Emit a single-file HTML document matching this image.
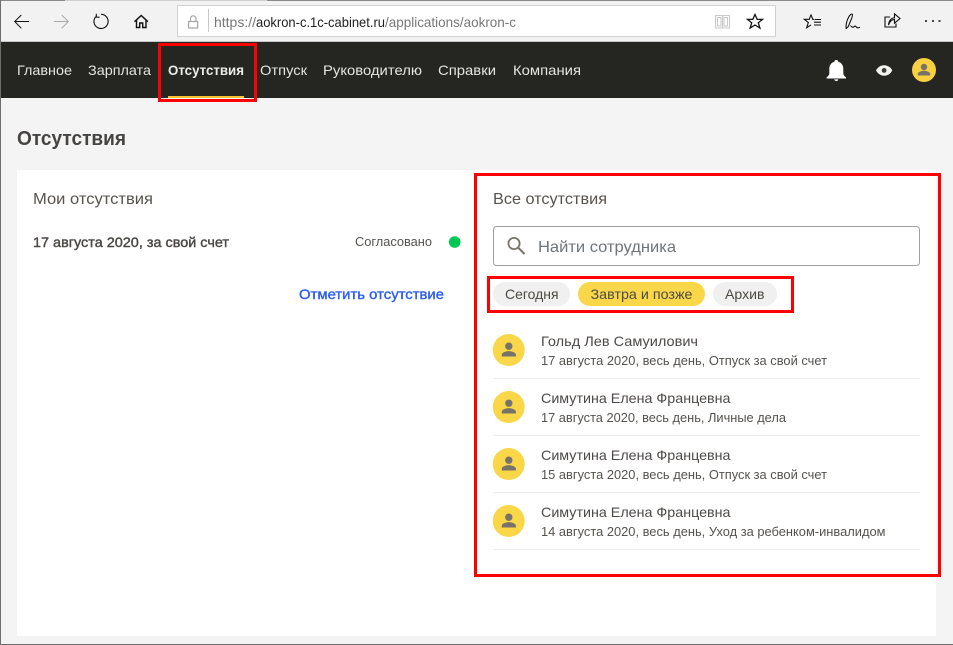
<!DOCTYPE html>
<html lang="ru">
<head>
<meta charset="utf-8">
<title>Отсутствия</title>
<style>
html,body{margin:0;padding:0;width:953px;height:645px;overflow:hidden;background:#f4f4f4}
svg{display:block}
text{font-family:"Liberation Sans",sans-serif}
.nav{font-size:14px;fill:#e4e4e0}
.name{font-size:14px;fill:#4d4a48}
.sub{font-size:12.5px;fill:#55534f}
.chip{font-size:14px;fill:#4d4a44}
.ic{fill:none;stroke:#111;stroke-width:1.1}
</style>
</head>
<body>
<svg width="953" height="645" viewBox="0 0 953 645" xmlns="http://www.w3.org/2000/svg">
<defs>
<g id="p"><path fill="#77736a" d="M501.800 356.500v-1.800c0-2.400 4.700-3.600 7-3.600s7 1.200 7.200 3.600v1.800z"/><circle cx="508.800" cy="346.200" r="3.700" fill="#77736a"/></g>
</defs>
<!-- browser chrome -->
<rect width="953" height="42" fill="#f2f2f2"/>
<rect x="0" y="0" width="65" height="1" fill="#8a8a8a"/>
<rect x="65" y="0" width="202" height="1" fill="#d0d0d0"/>
<rect x="267" y="0" width="686" height="1" fill="#8a8a8a"/>
<rect x="0" y="41" width="953" height="1" fill="#c8c8c8"/>
<rect x="177.500" y="5.500" width="598" height="31" fill="#fff" stroke="#d2d2d2"/>
<path class="ic" stroke-width="1" style="stroke-width:1" d="M29 21.500H14.700M21.300 15l-6.600 6.500 6.600 6.800"/>
<path class="ic" style="stroke:#a8a8a8;stroke-width:1" d="M54 21.500h14.300M61.700 15l6.600 6.500-6.600 6.800"/>
<path class="ic" d="M101 14.300a7.100 7.100 0 1 1-5.200 2.300M96.300 13.800v3.200l3.300.3"/>
<path class="ic" style="stroke-width:1.400" d="M134.500 21.700l6.700-6.200 6.700 6.200M136.500 20v7.500h3.200v-4.500h3v4.500h3.300V20"/>
<path fill="none" stroke="#a6a6a6" stroke-width="1.200" d="M188.600 21.500h9v6.500h-9zM190.500 21.500v-3a2.700 2.700 0 0 1 5.400 0v3"/>
<rect x="208" y="9" width="1" height="23" fill="#c8c8c8"/>
<text x="214" y="27" font-size="14" fill="#777" textLength="42" lengthAdjust="spacingAndGlyphs">https://</text>
<text x="256" y="27" font-size="14" fill="#222" textLength="129" lengthAdjust="spacingAndGlyphs">aokron-c.1c-cabinet.ru</text>
<text x="385" y="27" font-size="14" fill="#777" textLength="131" lengthAdjust="spacingAndGlyphs">/applications/aokron-c</text>
<path fill="none" stroke="#cacaca" stroke-width="1.100" d="M715.500 15.500h14v12.500h-14zM722.500 15.500v12.500M717.500 17.500h3.500v8.500h-3.500zM724 17.500h3.500v8.500H724z"/>
<path class="ic" style="stroke-width:1.300" d="M755 14.500l2.200 4.900h5.300l-4.200 3.400 1.600 5.200-4.900-3-4.900 3 1.600-5.200-4.200-3.400h5.300z"/>
<path class="ic" d="M811 14.500l1.700 4.800h1.300M811 14.500l-1.700 4.800h-5l4 3.200-1.600 5.200 4.300-2.800M814.500 19.500h6.500M814 22.200h7M814 25h7"/>
<path class="ic" d="M846.200 28.500c-.6-3 .5-8 2.500-11.500 1-1.800 2.700-3.500 3.500-2.800 1 .8-.3 3.500-1.300 6l-2.700 6.500zM850.500 25.500c1.200 1.800 2.800 2.300 3.800 1s2 .8 3 1.200 2-.1 2.700-.5"/>
<path class="ic" d="M890 17h-5v10h11v-3.500M888.500 25c.3-4 2.500-7 6-7.200v-4l5.500 4.700-5.500 4.700v-3.700c-2.500 0-4.500 1.500-6 5.500z"/>
<g fill="#444"><rect x="925" y="20" width="2" height="2"/><rect x="932" y="20" width="2" height="2"/><rect x="938.500" y="20" width="2" height="2"/></g>
<!-- nav -->
<rect x="0" y="42" width="953" height="56" fill="#252521"/>
<text class="nav" x="17" y="75" textLength="55" lengthAdjust="spacingAndGlyphs">Главное</text>
<text class="nav" x="88" y="75" textLength="63" lengthAdjust="spacingAndGlyphs">Зарплата</text>
<text class="nav" x="168" y="75" font-weight="700" style="fill:#ecece8" textLength="76" lengthAdjust="spacingAndGlyphs">Отсутствия</text>
<text class="nav" x="260" y="75" textLength="47" lengthAdjust="spacingAndGlyphs">Отпуск</text>
<text class="nav" x="323" y="75" textLength="99" lengthAdjust="spacingAndGlyphs">Руководителю</text>
<text class="nav" x="438" y="75" textLength="58" lengthAdjust="spacingAndGlyphs">Справки</text>
<text class="nav" x="513" y="75" textLength="68" lengthAdjust="spacingAndGlyphs">Компания</text>
<rect x="168" y="96" width="76" height="2" fill="#f8c32c"/>
<path fill="#fff" d="M836.300 60c1.200 0 1.900.8 2 1.800 3.200 1 5 3.700 5 7v4.700c0 1.500 1.500 3 2.700 3.800v1.200h-19.400v-1.200c1.200-.8 2.700-2.300 2.700-3.800v-4.700c0-3.300 1.800-6 5-7 .1-1 .8-1.800 2-1.800z"/>
<path fill="#fff" d="M834.300 79.400h4c0 1-.8 1.600-2 1.600s-2-.6-2-1.600z"/>
<path fill="#f2f2f0" d="M876 70.400c1.800-3.300 4.600-5.200 8.100-5.200s6.500 1.900 8.200 5.200c-1.700 3.400-4.700 5.300-8.200 5.300s-6.300-1.900-8.100-5.300z"/>
<circle cx="884.100" cy="70.400" r="2.400" fill="#3a3a36"/>
<circle cx="924" cy="70" r="12" fill="#f8d040"/>
<circle cx="924" cy="67" r="3.200" fill="#77736a"/>
<path fill="#77736a" d="M917.800 75.500v-1.500c0-2 4-3.200 6.200-3.200s6.200 1.200 6.200 3.200v1.500z"/>
<!-- page -->
<rect x="17" y="170" width="919" height="466" fill="#fff"/>
<text x="17" y="145" font-size="20" font-weight="700" fill="#464442" textLength="109" lengthAdjust="spacingAndGlyphs">Отсутствия</text>
<text x="33" y="204" font-size="16" fill="#57534e" textLength="120" lengthAdjust="spacingAndGlyphs">Мои отсутствия</text>
<text x="33" y="247" font-size="14" fill="#4a4744" stroke="#4a4744" stroke-width=".4" textLength="196" lengthAdjust="spacingAndGlyphs">17 августа 2020, за свой счет</text>
<text x="355" y="246" font-size="12.500" fill="#55534f" textLength="77" lengthAdjust="spacingAndGlyphs">Согласовано</text>
<circle cx="454.700" cy="242" r="5.800" fill="#00c853"/>
<text x="299" y="299" font-size="14" fill="#2f5fee" stroke="#2f5fee" stroke-width=".4" textLength="145" lengthAdjust="spacingAndGlyphs">Отметить отсутствие</text>
<text x="493" y="204" font-size="16" fill="#57534e" textLength="114" lengthAdjust="spacingAndGlyphs">Все отсутствия</text>
<rect x="493.500" y="226.500" width="426" height="39" rx="3" fill="#fff" stroke="#a0a09c"/>
<circle cx="514" cy="243.500" r="5.600" fill="none" stroke="#77736a" stroke-width="1.800"/>
<path d="M518.200 247.700l6.300 6.300" stroke="#77736a" stroke-width="2" fill="none"/>
<text x="538" y="252" font-size="16" fill="#6f747a" textLength="138" lengthAdjust="spacingAndGlyphs">Найти сотрудника</text>
<rect x="493" y="282" width="77" height="24" rx="12" fill="#f0f0f0"/>
<rect x="578" y="282" width="127" height="24" rx="12" fill="#f9d749"/>
<rect x="713" y="282" width="64" height="24" rx="12" fill="#f0f0f0"/>
<text class="chip" x="505" y="299" textLength="53.500" lengthAdjust="spacingAndGlyphs">Сегодня</text>
<text class="chip" x="590.500" y="299" textLength="102" lengthAdjust="spacingAndGlyphs">Завтра и позже</text>
<text class="chip" x="725" y="299" textLength="39.500" lengthAdjust="spacingAndGlyphs">Архив</text>
<!-- list -->
<g fill="#f9d749"><circle cx="508.700" cy="350" r="16"/><circle cx="508.700" cy="407" r="16"/><circle cx="508.700" cy="464" r="16"/><circle cx="508.700" cy="521" r="16"/></g>
<use href="#p"/><use href="#p" y="57"/><use href="#p" y="114"/><use href="#p" y="171"/>
<text class="name" x="541" y="346" textLength="157" lengthAdjust="spacingAndGlyphs">Гольд Лев Самуилович</text>
<text class="sub" x="541" y="365" textLength="286" lengthAdjust="spacingAndGlyphs">17 августа 2020, весь день, Отпуск за свой счет</text>
<rect x="493" y="378" width="427" height="1" fill="#ededed"/>
<text class="name" x="541" y="403" textLength="189.500" lengthAdjust="spacingAndGlyphs">Симутина Елена Францевна</text>
<text class="sub" x="541" y="422" textLength="245" lengthAdjust="spacingAndGlyphs">17 августа 2020, весь день, Личные дела</text>
<rect x="493" y="435" width="427" height="1" fill="#ededed"/>
<text class="name" x="541" y="460" textLength="189.500" lengthAdjust="spacingAndGlyphs">Симутина Елена Францевна</text>
<text class="sub" x="541" y="479" textLength="286" lengthAdjust="spacingAndGlyphs">15 августа 2020, весь день, Отпуск за свой счет</text>
<rect x="493" y="492" width="427" height="1" fill="#ededed"/>
<text class="name" x="541" y="517" textLength="189.500" lengthAdjust="spacingAndGlyphs">Симутина Елена Францевна</text>
<text class="sub" x="541" y="536" textLength="344.500" lengthAdjust="spacingAndGlyphs">14 августа 2020, весь день, Уход за ребенком-инвалидом</text>
<rect x="493" y="549" width="427" height="1" fill="#ededed"/>
<!-- red annotation frames -->
<g fill="none" stroke="#f00" stroke-width="3">
<rect x="159.500" y="44.500" width="96" height="56"/>
<rect x="475.500" y="174.500" width="464" height="401"/>
<rect x="488.500" y="277.500" width="304" height="34"/>
</g>
<!-- window edges -->
<rect x="0" y="0" width="1" height="645" fill="#6e6e6e"/>
<rect x="0" y="644" width="953" height="1" fill="#6e6e6e"/>
</svg>
</body>
</html>
